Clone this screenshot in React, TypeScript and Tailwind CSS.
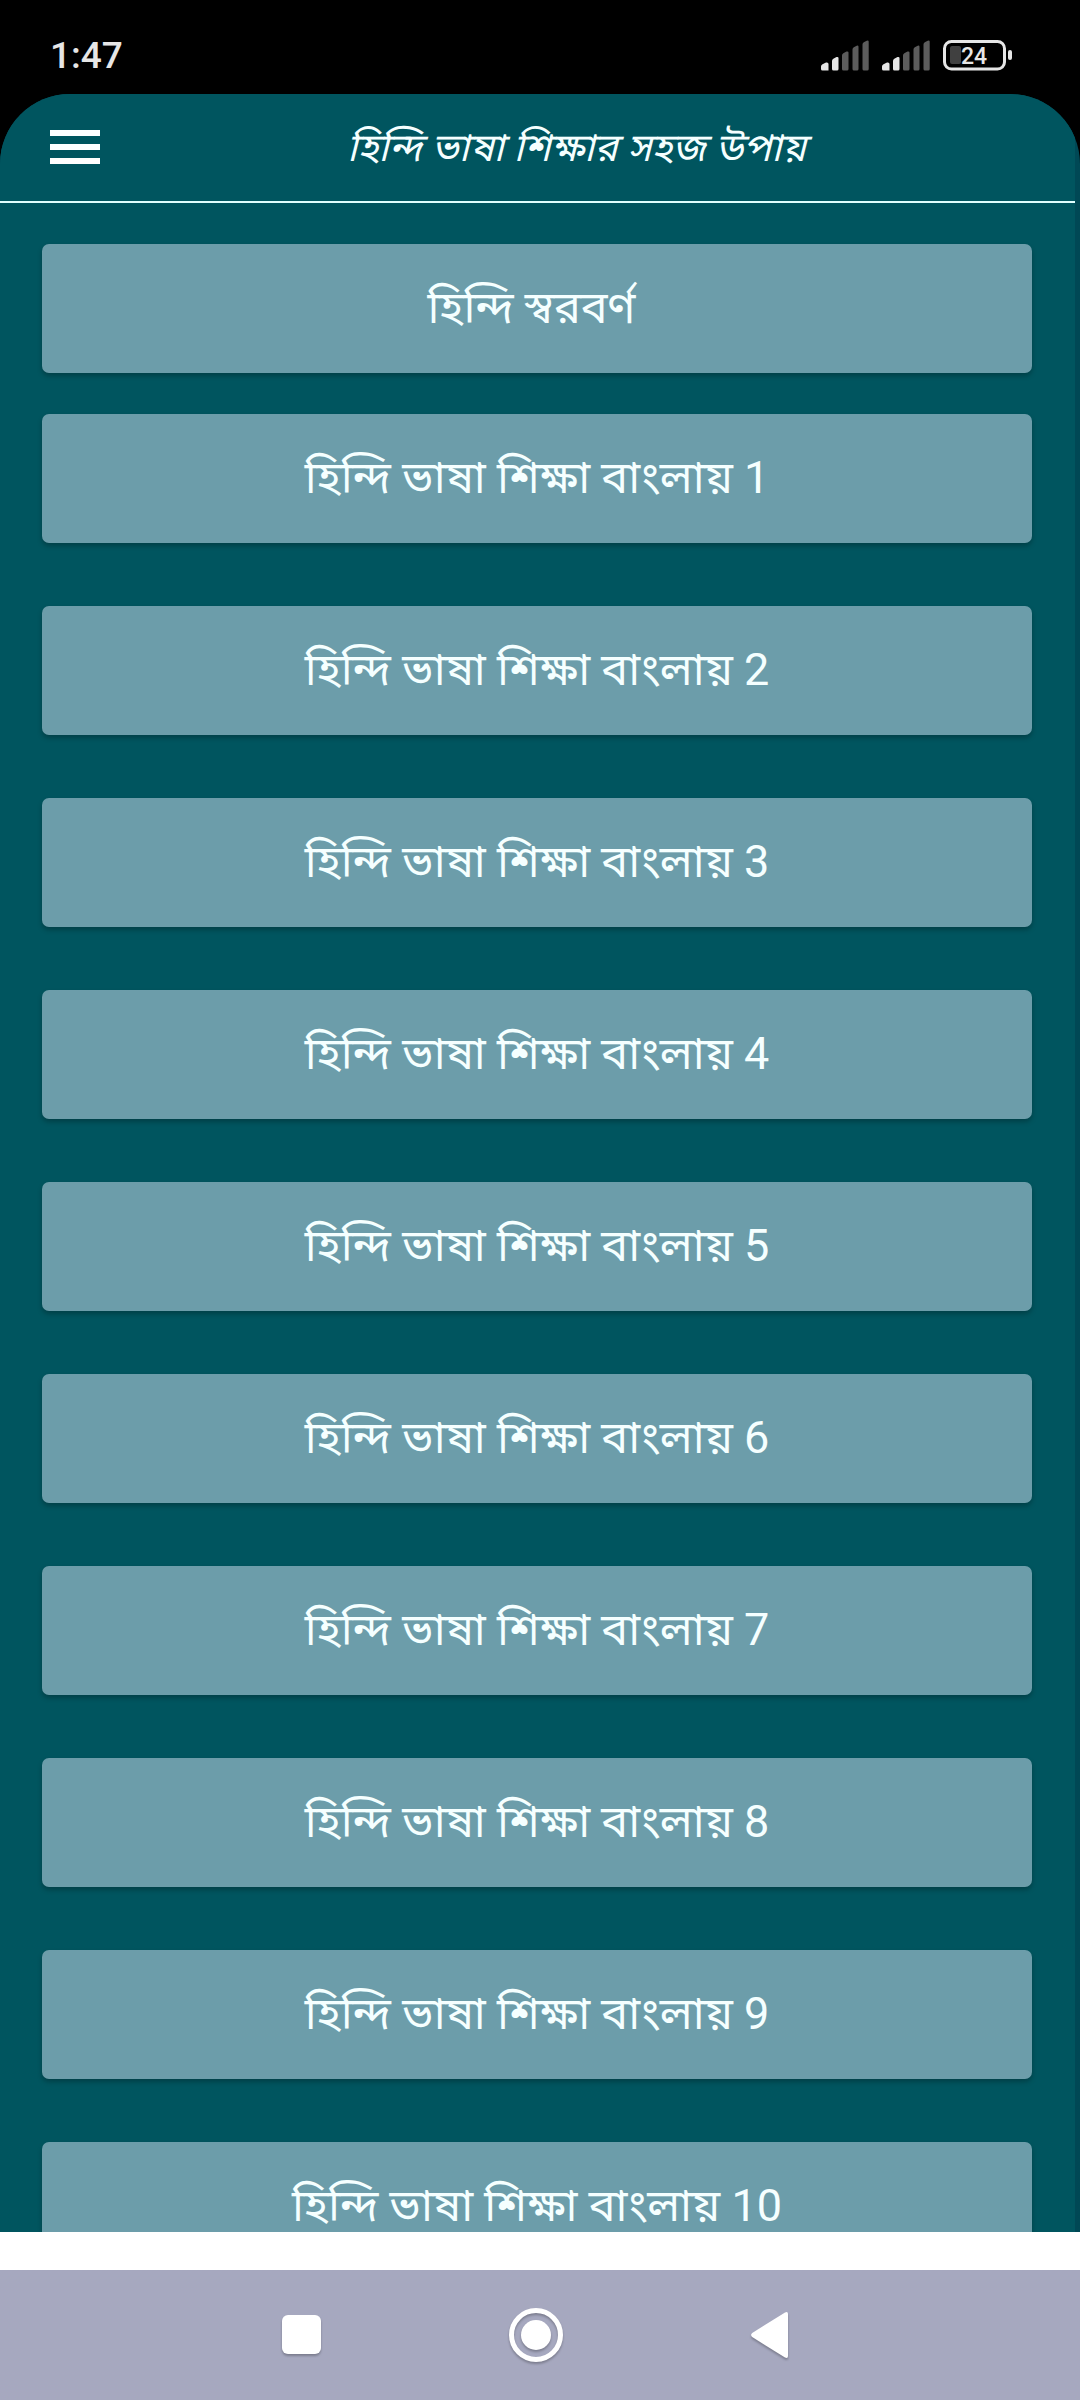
import React from 'react';

const lessons = [1, 2, 3, 4, 5, 6, 7, 8, 9, 10];

function SignalBars() {
  return (
    <svg width="48" height="31" viewBox="0 0 48 31" fill="#e6e6e6">
      <path d="M0 26.5 Q0 25 1.5 24.3 L5 22.5 Q7.5 22 7.5 24 V30.5 H1.5 Q0 30.5 0 29Z" />
      <path d="M11 21 Q11 19.5 12.3 18.8 L15.5 17 Q17.5 16.5 17.5 18 V29 Q17.5 30.5 16 30.5 H12.5 Q11 30.5 11 29Z" />
      <g fill="#5c5c5c">
        <path d="M21 15.5 Q21 14 22.3 13.3 L25.5 11.5 Q27.5 11 27.5 12.5 V29 Q27.5 30.5 26 30.5 H22.5 Q21 30.5 21 29Z" />
        <path d="M31.5 9.5 Q31.5 8 32.8 7.3 L35.7 5.7 Q37.5 5.2 37.5 6.7 V29 Q37.5 30.5 36 30.5 H33 Q31.5 30.5 31.5 29Z" />
        <path d="M41.5 4.5 Q41.5 3 42.8 2.3 L45.7 0.7 Q47.7 0 47.7 1.7 V29 Q47.7 30.5 46.2 30.5 H43 Q41.5 30.5 41.5 29Z" />
      </g>
    </svg>
  );
}

function Battery() {
  return (
    <svg width="70" height="31" viewBox="0 0 70 31">
      <rect x="1.5" y="1.5" width="60" height="27.5" rx="7" fill="none" stroke="#e6e6e6" strokeWidth="3" />
      <rect x="7" y="6" width="11" height="18" rx="2" fill="#404040" />
      <rect x="65" y="10" width="4" height="10" rx="2" fill="#e6e6e6" />
      <text x="31" y="24" textAnchor="middle" fontSize="23" fontWeight="500" fill="#e6e6e6">24</text>
    </svg>
  );
}

function StatusBar() {
  return (
    <div className="flex h-[94px] shrink-0 items-center justify-between bg-black pt-4 pr-[67px] pl-[50px]">
      <span className="text-[37px] leading-none font-medium text-[#e6e6e6]">1:47</span>
      <div className="flex items-center gap-[13px]">
        <SignalBars />
        <SignalBars />
        <Battery />
      </div>
    </div>
  );
}

function LessonButton({ children }: { children: React.ReactNode }) {
  return (
    <button
      type="button"
      className="flex h-[129px] w-full shrink-0 items-center justify-center rounded-[7px] bg-[#6c9daa] pb-0.5 text-[45px] leading-[52px] shadow-[0_3px_5px_rgba(0,0,0,0.25)]"
    >
      {children}
    </button>
  );
}

export default function App() {
  return (
    <div className="flex h-screen flex-col overflow-hidden bg-black font-['Roboto','Noto_Sans','Noto_Sans_Bengali',sans-serif] text-[#f5ffff]">
      <StatusBar />

      {/* App window */}
      <div className="flex min-h-0 flex-1 flex-col overflow-hidden rounded-t-[70px] bg-[#004855] pr-[5px]">
        <div className="flex min-h-0 flex-1 flex-col overflow-hidden bg-[#00555f]">
          <header className="flex h-[109px] shrink-0 items-center border-b-2 border-[#e0ffff] pr-[22px] pl-[50px]">
            <button type="button" aria-label="Menu" className="pb-0.5">
              <svg width="50" height="34" viewBox="0 0 50 34" fill="#ffffff">
                <path d="M0 0h50v6H0zM0 14h50v6H0zM0 28h50v6H0z" />
              </svg>
            </button>
            <h1 className="flex-1 text-center text-[39px] leading-[48px] italic">হিন্দি ভাষা শিক্ষার সহজ উপায়</h1>
          </header>

          <main className="flex min-h-0 flex-1 flex-col overflow-hidden pt-[41px] pr-[43px] pl-[42px]">
            <LessonButton>হিন্দি স্বরবর্ণ&nbsp;</LessonButton>
            <div className="mt-[41px] flex flex-col gap-[63px]">
              {lessons.map((n) => (
                <LessonButton key={n}>হিন্দি ভাষা শিক্ষা বাংলায় {n}</LessonButton>
              ))}
            </div>
          </main>
        </div>
      </div>

      <div className="h-[38px] shrink-0 bg-white" />

      {/* System navigation */}
      <nav className="flex h-[130px] shrink-0 items-center justify-center gap-[180px] bg-[#a6a8bf] pr-2">
        <button type="button" aria-label="Recent apps" className="drop-shadow-[0_2px_1px_rgba(0,0,0,0.25)]">
          <svg width="54" height="54" viewBox="0 0 54 54" fill="#ffffff">
            <rect x="7" y="7" width="39" height="39" rx="6" />
          </svg>
        </button>
        <button type="button" aria-label="Home" className="drop-shadow-[0_2px_1px_rgba(0,0,0,0.25)]">
          <svg width="54" height="54" viewBox="0 0 54 54" fill="#ffffff">
            <circle cx="27" cy="27" r="24.5" fill="none" stroke="#ffffff" strokeWidth="5" />
            <circle cx="27" cy="27" r="15" />
          </svg>
        </button>
        <button type="button" aria-label="Back" className="drop-shadow-[0_2px_1px_rgba(0,0,0,0.25)]">
          <svg width="54" height="54" viewBox="0 0 54 54" fill="#ffffff">
            <path d="M9.2 25 L42 4.4 Q45 3 45 6 V48 Q45 51 42 49.6 L9.2 29 Q7 27 9.2 25Z" />
          </svg>
        </button>
      </nav>
    </div>
  );
}
